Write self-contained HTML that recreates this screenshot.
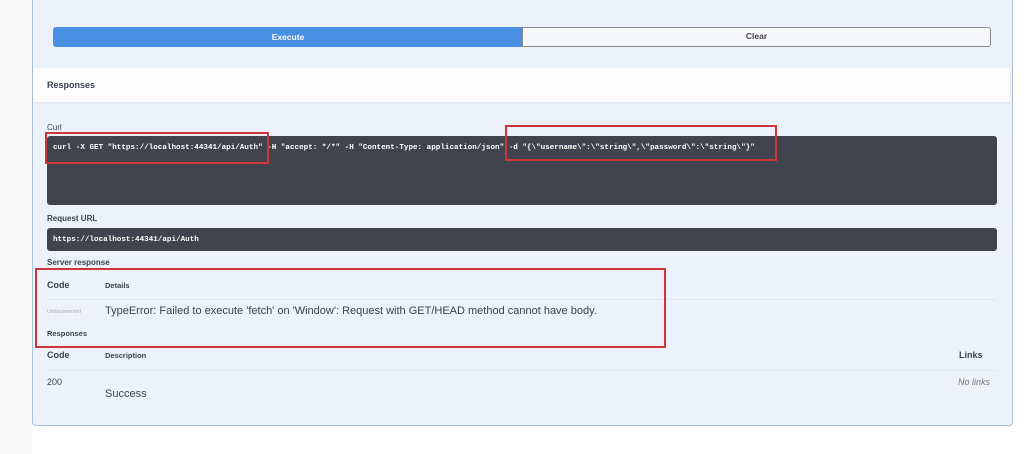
<!DOCTYPE html>
<html><head><meta charset="utf-8"><style>
*{margin:0;padding:0;box-sizing:border-box}
body{width:1024px;height:454px;background:#fff;font-family:"Liberation Sans",sans-serif;position:relative;overflow:hidden;color:#3b4151}
.a{position:absolute}
.panel{left:32px;top:-2px;width:981px;height:428px;background:#edf2fa;border:1px solid #a9c2d8;border-top:none;border-radius:0 0 4px 4px}
.lbl{font-size:8px;font-weight:bold;color:#3b4151}
.dark{background:#41444e;border-radius:3px}
.mono{font-family:"Liberation Mono",monospace;font-weight:bold;font-size:7.6px;color:#fff;white-space:pre}
.red{border:2px solid #d0353a}
</style></head><body>
<div class="a" style="left:0;top:0;width:32px;height:454px;background:#fafafa"></div>
<div class="a panel"></div>
<div class="a" style="left:53px;top:27px;width:470px;height:20px;background:#4990e2;border-radius:3px 0 0 3px;color:#fff;font-size:8.5px;font-weight:bold;text-align:center;line-height:20px">Execute</div>
<div class="a" style="left:522px;top:27px;width:469px;height:20px;border:1.5px solid #888;border-radius:0 3px 3px 0;background:#f5f7fa;font-size:8.5px;font-weight:bold;text-align:center;line-height:17px;color:#444">Clear</div>
<div class="a" style="left:33px;top:68px;width:977px;height:34px;background:#fdfdfe;box-shadow:0 1px 2px rgba(0,0,0,.06)"></div>
<div class="a lbl" style="left:47px;top:80px;font-size:9px">Responses</div>
<div class="a lbl" style="left:47px;top:123px;font-weight:normal">Curl</div>
<div class="a dark" style="left:47px;top:136px;width:950px;height:69px"></div>
<div class="a mono" style="left:53px;top:144px">curl -X GET "https://localhost:44341/api/Auth" -H "accept: */*" -H "Content-Type: application/json" -d "{\"username\":\"string\",\"password\":\"string\"}"</div>
<div class="a red" style="left:45px;top:132px;width:224px;height:32px"></div>
<div class="a red" style="left:505px;top:125px;width:272px;height:36px"></div>
<div class="a lbl" style="left:47px;top:214px">Request URL</div>
<div class="a dark" style="left:47px;top:228px;width:950px;height:23px"></div>
<div class="a mono" style="left:53px;top:236px">https://localhost:44341/api/Auth</div>
<div class="a lbl" style="left:47px;top:258px">Server response</div>
<div class="a lbl" style="left:47px;top:280px;font-size:9px">Code</div>
<div class="a lbl" style="left:105px;top:281px;font-size:7.5px">Details</div>
<div class="a" style="left:47px;top:299px;width:950px;height:1px;background:#e2e7ef"></div>
<div class="a" style="left:47px;top:309px;font-size:5px;color:#aab;font-style:italic">Undocumented</div>
<div class="a" style="left:105px;top:305px;font-size:11px;color:#3b4151">TypeError: Failed to execute 'fetch' on 'Window': Request with GET/HEAD method cannot have body.</div>
<div class="a lbl" style="left:47px;top:329px;font-size:7.5px">Responses</div>
<div class="a red" style="left:35px;top:268px;width:631px;height:80px"></div>
<div class="a lbl" style="left:47px;top:350px;font-size:9px">Code</div>
<div class="a lbl" style="left:105px;top:351px;font-size:7.5px">Description</div>
<div class="a lbl" style="left:959px;top:350px;font-size:9px">Links</div>
<div class="a" style="left:47px;top:370px;width:950px;height:1px;background:#e2e7ef"></div>
<div class="a" style="left:47px;top:377px;font-size:9px">200</div>
<div class="a" style="left:105px;top:388px;font-size:11px">Success</div>
<div class="a" style="left:958px;top:377px;font-size:9px;font-style:italic;color:#777">No links</div>
</body></html>
